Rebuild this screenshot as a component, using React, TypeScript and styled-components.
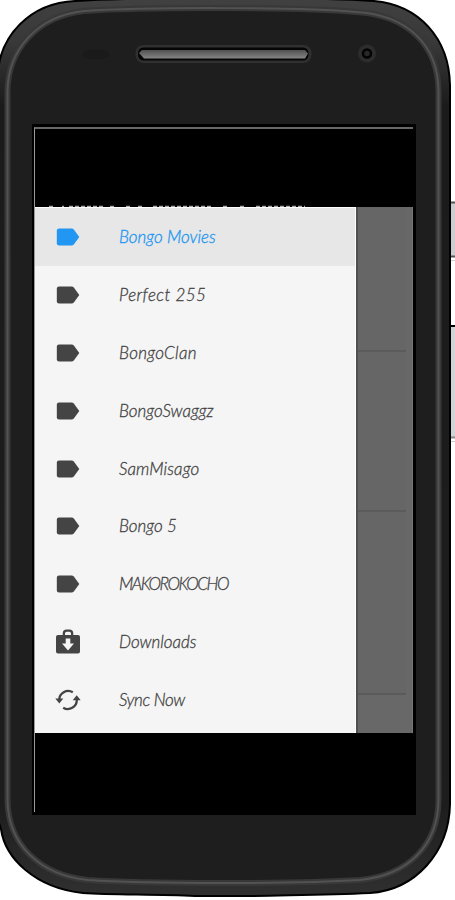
import React from "react";
import styled, { createGlobalStyle } from "styled-components";

const GlobalStyle = createGlobalStyle`
  * { box-sizing: border-box; }
  body { margin: 0; background: #fff; overflow: hidden; }
`;

const Stage = styled.main`
  position: relative;
  width: 455px;
  height: 900px;
  padding: 124px 38px 0 32px;
  overflow: hidden;
  background: #fff;
`;

const DeviceArt = styled.svg`
  position: absolute;
  inset: 0;
`;

const Screen = styled.section`
  position: relative;
  width: 384px;
  height: 691px;
  padding: 3px 3px 3px 2px;
  background: #000;
`;

const Glass = styled.div`
  display: flex;
  flex-direction: column;
  height: 685px;
  border-top: 2px solid #686868;
  border-left: 1px solid #9a9a9a;
  background: #000;
`;

const Letterbox = styled.div`
  display: flex;
  align-items: flex-end;
  flex: 0 0 78px;
`;

const AppView = styled.div`
  display: flex;
  height: 526px;
  background: #666;
`;

const Drawer = styled.nav`
  flex: 0 0 321px;
  background: #f5f5f5;
  border-right: 1px solid #fff;
  border-top: 1px solid #fff;
`;

const Row = styled.a<{ $active?: boolean }>`
  display: flex;
  align-items: center;
  gap: 38.5px;
  height: 57.9px;
  padding-left: 19.5px;
  background: ${(p) => (p.$active ? "#e7e7e7" : "transparent")};
  color: ${(p) => (p.$active ? "#2196f3" : "#444")};
  text-decoration: none;
`;

const RowIcon = styled.svg`
  flex: 0 0 26px;
  width: 26px;
  height: 26px;
  fill: currentColor;
`;

const Label = styled.span<{ $tracking: number }>`
  font: italic 300 17px/24px Lato, "Open Sans", sans-serif;
  letter-spacing: ${(p) => p.$tracking}px;
  white-space: nowrap;
  -webkit-text-stroke: 0.3px currentColor;
`;

const Backdrop = styled.div`
  display: flex;
  flex: 1;
  flex-direction: column;
  padding-right: 6px;
  border-left: 2px solid #505050;
  border-right: 1px solid #777;
  background: #686868;
`;

const Card = styled.div<{ $height: number }>`
  height: ${(p) => p.$height}px;
  border-bottom: 2px solid #5b5b5b;
  background: #666;
`;

type IconKind = "label" | "downloads" | "sync";

const items: { text: string; icon: IconKind; tracking: number; active?: boolean }[] = [
  { text: "Bongo Movies", icon: "label", tracking: 0, active: true },
  { text: "Perfect 255", icon: "label", tracking: 0.45 },
  { text: "BongoClan", icon: "label", tracking: 0.3 },
  { text: "BongoSwaggz", icon: "label", tracking: 0 },
  { text: "SamMisago", icon: "label", tracking: 0.1 },
  { text: "Bongo 5", icon: "label", tracking: 0 },
  { text: "MAKOROKOCHO", icon: "label", tracking: -1.5 },
  { text: "Downloads", icon: "downloads", tracking: 0 },
  { text: "Sync Now", icon: "sync", tracking: -0.4 },
];

function MenuIcon({ kind }: { kind: IconKind }) {
  return (
    <RowIcon viewBox="0 0 26 26" aria-hidden="true">
      {kind === "label" && (
        <path d="M4 4.5H16.5Q18 4.5 19 5.8L24.3 13L19 20.2Q18 21.5 16.5 21.5H4Q1.8 21.5 1.8 19.3V6.7Q1.8 4.5 4 4.5Z" />
      )}
      {kind === "downloads" && (
        <path
          fillRule="evenodd"
          d="M7.7 6V4.5Q7.7 .5 11.7 .5H14.3Q18.3 .5 18.3 4.5V6H23Q25 6 25 8V22.5Q25 24.5 23 24.5H3Q1 24.5 1 22.5V8Q1 6 3 6ZM10 6H16V4.5Q16 2.8 14.3 2.8H11.7Q10 2.8 10 4.5ZM10.7 9.5V14.5H7L13 21.5L19 14.5H15.3V9.5Z"
        />
      )}
      {kind === "sync" && (
        <>
          <path
            d="M17.8 5.2A9 9 0 0 0 4.2 13M8.2 20.8A9 9 0 0 0 21.8 13"
            fill="none"
            stroke="currentColor"
            strokeWidth="2.3"
          />
          <path d="M.3 11.6H8.3L4.3 16.5ZM17.7 13.2H25.7L21.7 8.3Z" />
        </>
      )}
    </RowIcon>
  );
}

const bodyPath =
  "M-2 73C0 37 29 3 75 1C140-3 315-3 374 1C419 5 449 38 450 85V804C449 853 415 890 370 893C325 895 290 895 251 896H195C155 894 115 895 83 893C35 888 5 858 1 829L-2 820Z";
const rimPath =
  "M7.5 91C8 50 37 16 84 11C145 7 300 7 356 12C408 15 438 45 438.5 91V800C438 845 409 875 360 880C295 884 145 884 88 880C39 875 8 844 7.5 800Z";

function Device() {
  return (
    <DeviceArt width="455" height="900" viewBox="0 0 455 900" aria-hidden="true">
      <defs>
        <linearGradient id="casing" x1="0" y1="0" x2="0" y2="1">
          <stop offset="0" stopColor="#414141" />
          <stop offset=".05" stopColor="#383838" />
          <stop offset=".12" stopColor="#1b1b1b" />
          <stop offset=".9" stopColor="#1d1d1d" />
          <stop offset="1" stopColor="#303030" />
        </linearGradient>
        <linearGradient id="earpiece" x1="0" y1="0" x2="0" y2="1">
          <stop offset="0" stopColor="#505050" />
          <stop offset="1" stopColor="#858585" />
        </linearGradient>
      </defs>
      <rect x="447" y="202.500" width="12" height="54" fill="#cbcdce" stroke="#555" strokeWidth="2" />
      <path d="M450 260.500H455" stroke="#ccc" />
      <rect x="447" y="326" width="12" height="111" fill="#cfd4d6" />
      <path d="M450 326H455" stroke="#000" strokeWidth="2" />
      <path d="M450 437.500H455" stroke="#888" strokeWidth="2" />
      <path d="M450 441.500H455" stroke="#ccc" />
      <path d={bodyPath} fill="url(#casing)" stroke="#000" strokeWidth="2" />
      <path d={rimPath} fill="#1e1e1e" stroke="#383838" strokeWidth="6" />
      <path d={rimPath} fill="none" stroke="#525252" strokeWidth="2" />
      <ellipse cx="96" cy="54.500" rx="13" ry="5" fill="#1a1a1a" />
      <rect x="135.500" y="45" width="176" height="18" rx="8" fill="#303030" />
      <rect x="138" y="47.500" width="170.500" height="13" rx="5.500" fill="#050505" />
      <path d="M142 50H305L308 53.500L305 58.500H144L139 53Z" fill="url(#earpiece)" />
      <circle cx="367" cy="53.500" r="9" fill="#2d2d2d" />
      <circle cx="367" cy="53.500" r="4" fill="#282828" stroke="#030303" strokeWidth="2.500" />
    </DeviceArt>
  );
}

export default function App() {
  return (
    <Stage>
      <GlobalStyle />
      <Device />
      <Screen>
        <Glass>
          <Letterbox>
            <svg width="322" height="3" viewBox="0 0 322 3" aria-hidden="true">
              <path
                d="M14 2.300H18M27 2.300H29M34 2.300H68M75 2.300H81M91 2.300H95M103 2.300H109M118 2.300H177M188 2.300H194M205 2.300H211M221 2.300H270"
                stroke="#aaa"
                strokeWidth="1.300"
                strokeDasharray="4 2"
              />
            </svg>
          </Letterbox>
          <AppView>
            <Drawer>
              {items.map((item) => (
                <Row key={item.text} $active={item.active}>
                  <MenuIcon kind={item.icon} />
                  <Label $tracking={item.tracking}>{item.text}</Label>
                </Row>
              ))}
            </Drawer>
            <Backdrop>
              <Card $height={145} />
              <Card $height={160} />
              <Card $height={183} />
            </Backdrop>
          </AppView>
        </Glass>
      </Screen>
    </Stage>
  );
}
